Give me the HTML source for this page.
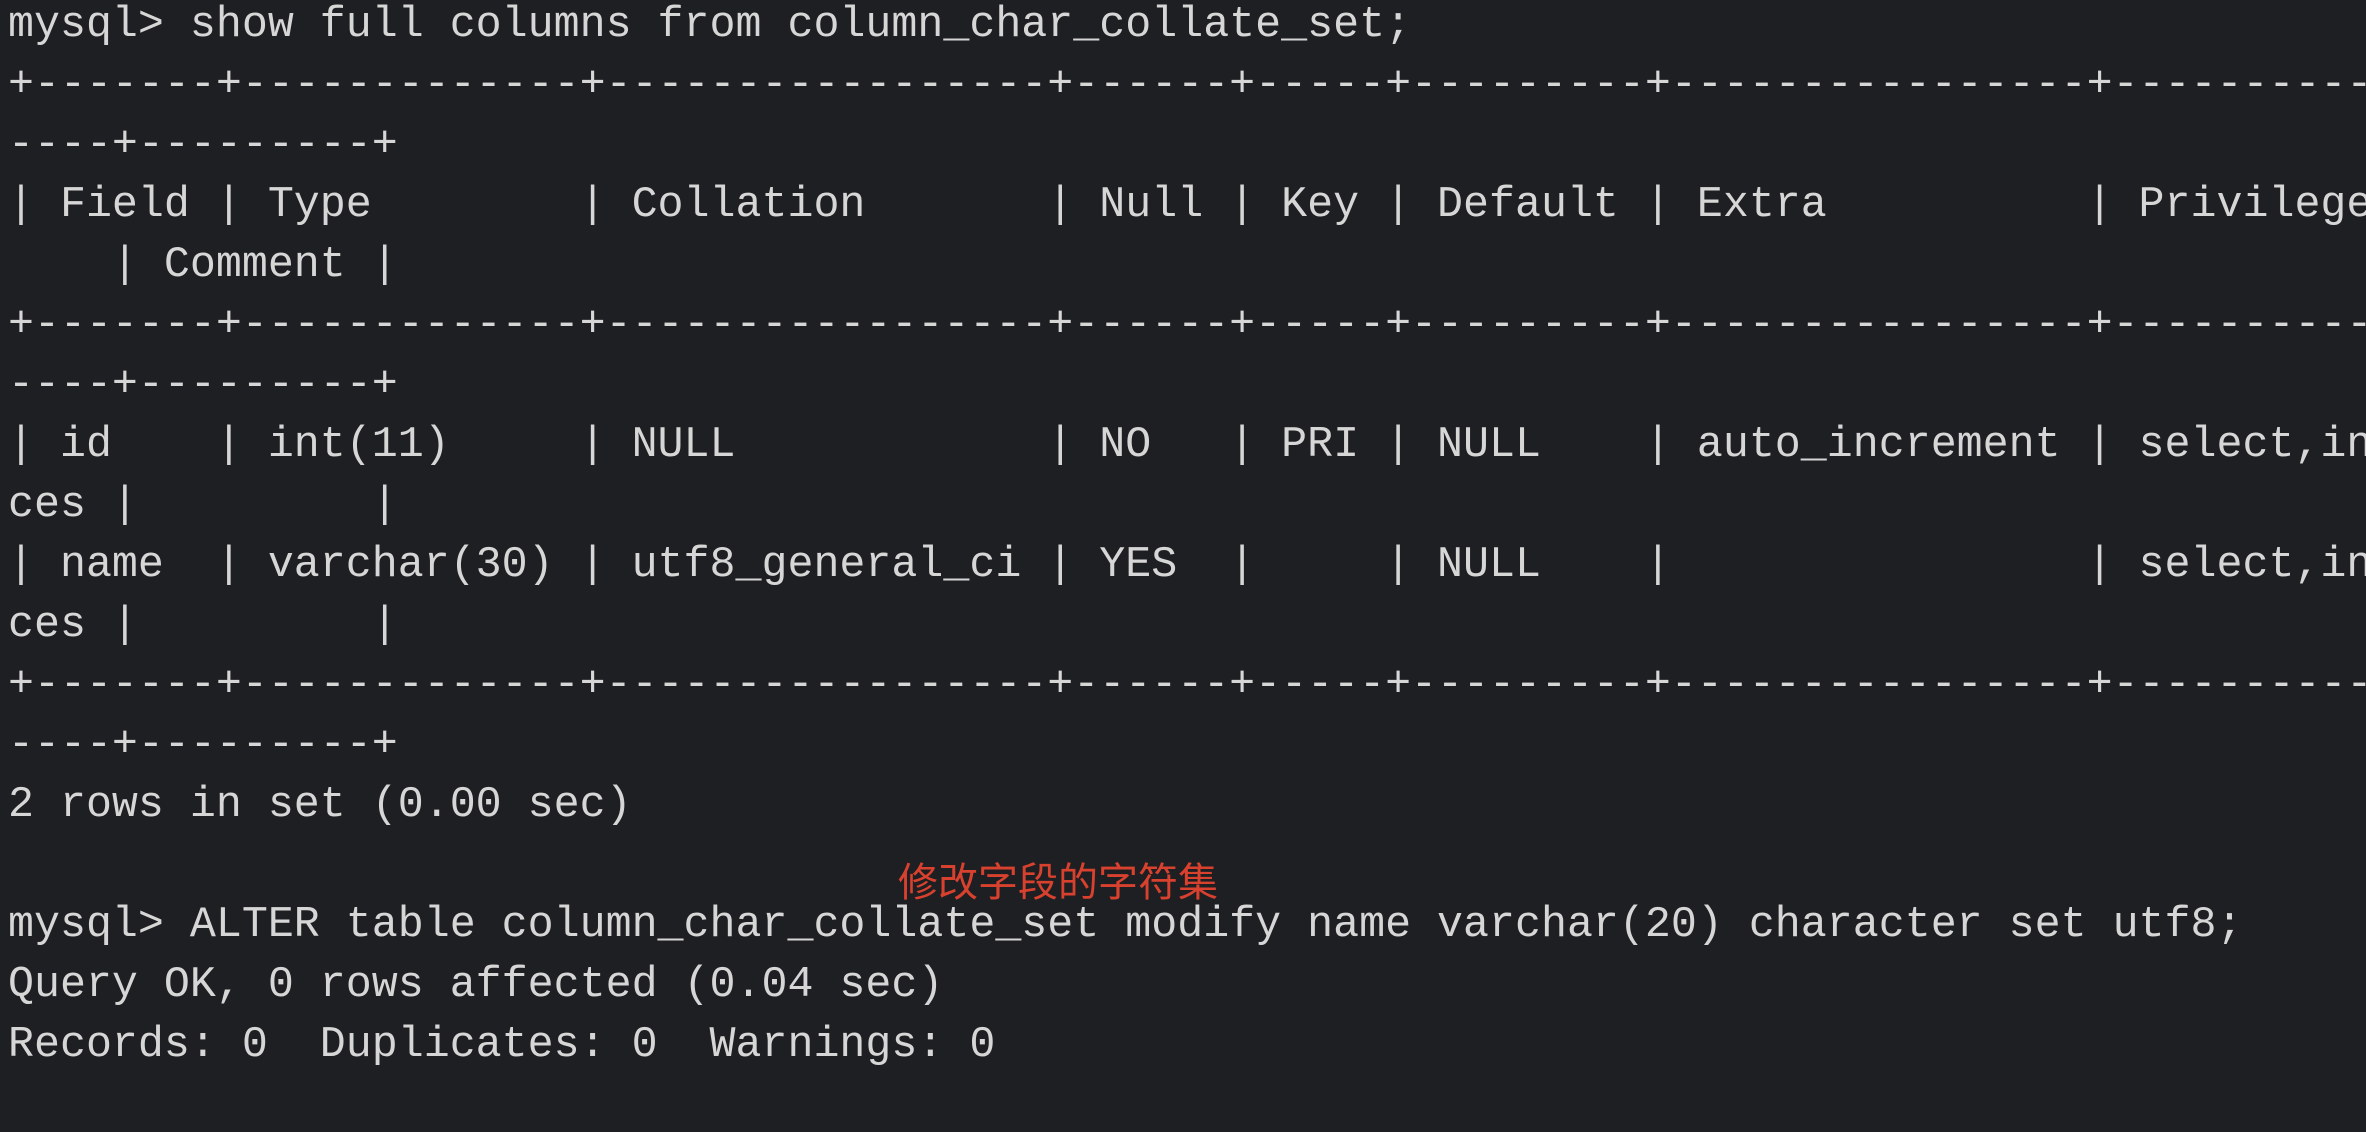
<!DOCTYPE html>
<html><head><meta charset="utf-8"><style>
html,body{margin:0;padding:0;background:#1e1f22;width:2366px;height:1132px;overflow:hidden;position:relative}
pre{margin:0;position:absolute;left:8px;top:-4px;width:2358px;overflow:hidden;font-family:"Liberation Mono",monospace;font-size:43.3px;line-height:60px;color:#d6d6d6;white-space:pre}
.note{position:absolute;left:898px;top:859px;font-family:"Liberation Sans","Noto Sans CJK SC",sans-serif;font-size:40px;line-height:48px;color:#d9412f;white-space:nowrap}
</style></head><body>
<pre>mysql&gt; show full columns from column_char_collate_set;
+-------+-------------+-----------------+------+-----+---------+----------------+---------------------------------+
----+---------+
| Field | Type        | Collation       | Null | Key | Default | Extra          | Privileges                      
    | Comment |
+-------+-------------+-----------------+------+-----+---------+----------------+---------------------------------+
----+---------+
| id    | int(11)     | NULL            | NO   | PRI | NULL    | auto_increment | select,insert,update,references 
ces |         |
| name  | varchar(30) | utf8_general_ci | YES  |     | NULL    |                | select,insert,update,references 
ces |         |
+-------+-------------+-----------------+------+-----+---------+----------------+---------------------------------+
----+---------+
2 rows in set (0.00 sec)

mysql&gt; ALTER table column_char_collate_set modify name varchar(20) character set utf8;
Query OK, 0 rows affected (0.04 sec)
Records: 0  Duplicates: 0  Warnings: 0</pre>
<div class="note">修改字段的字符集</div>
</body></html>
